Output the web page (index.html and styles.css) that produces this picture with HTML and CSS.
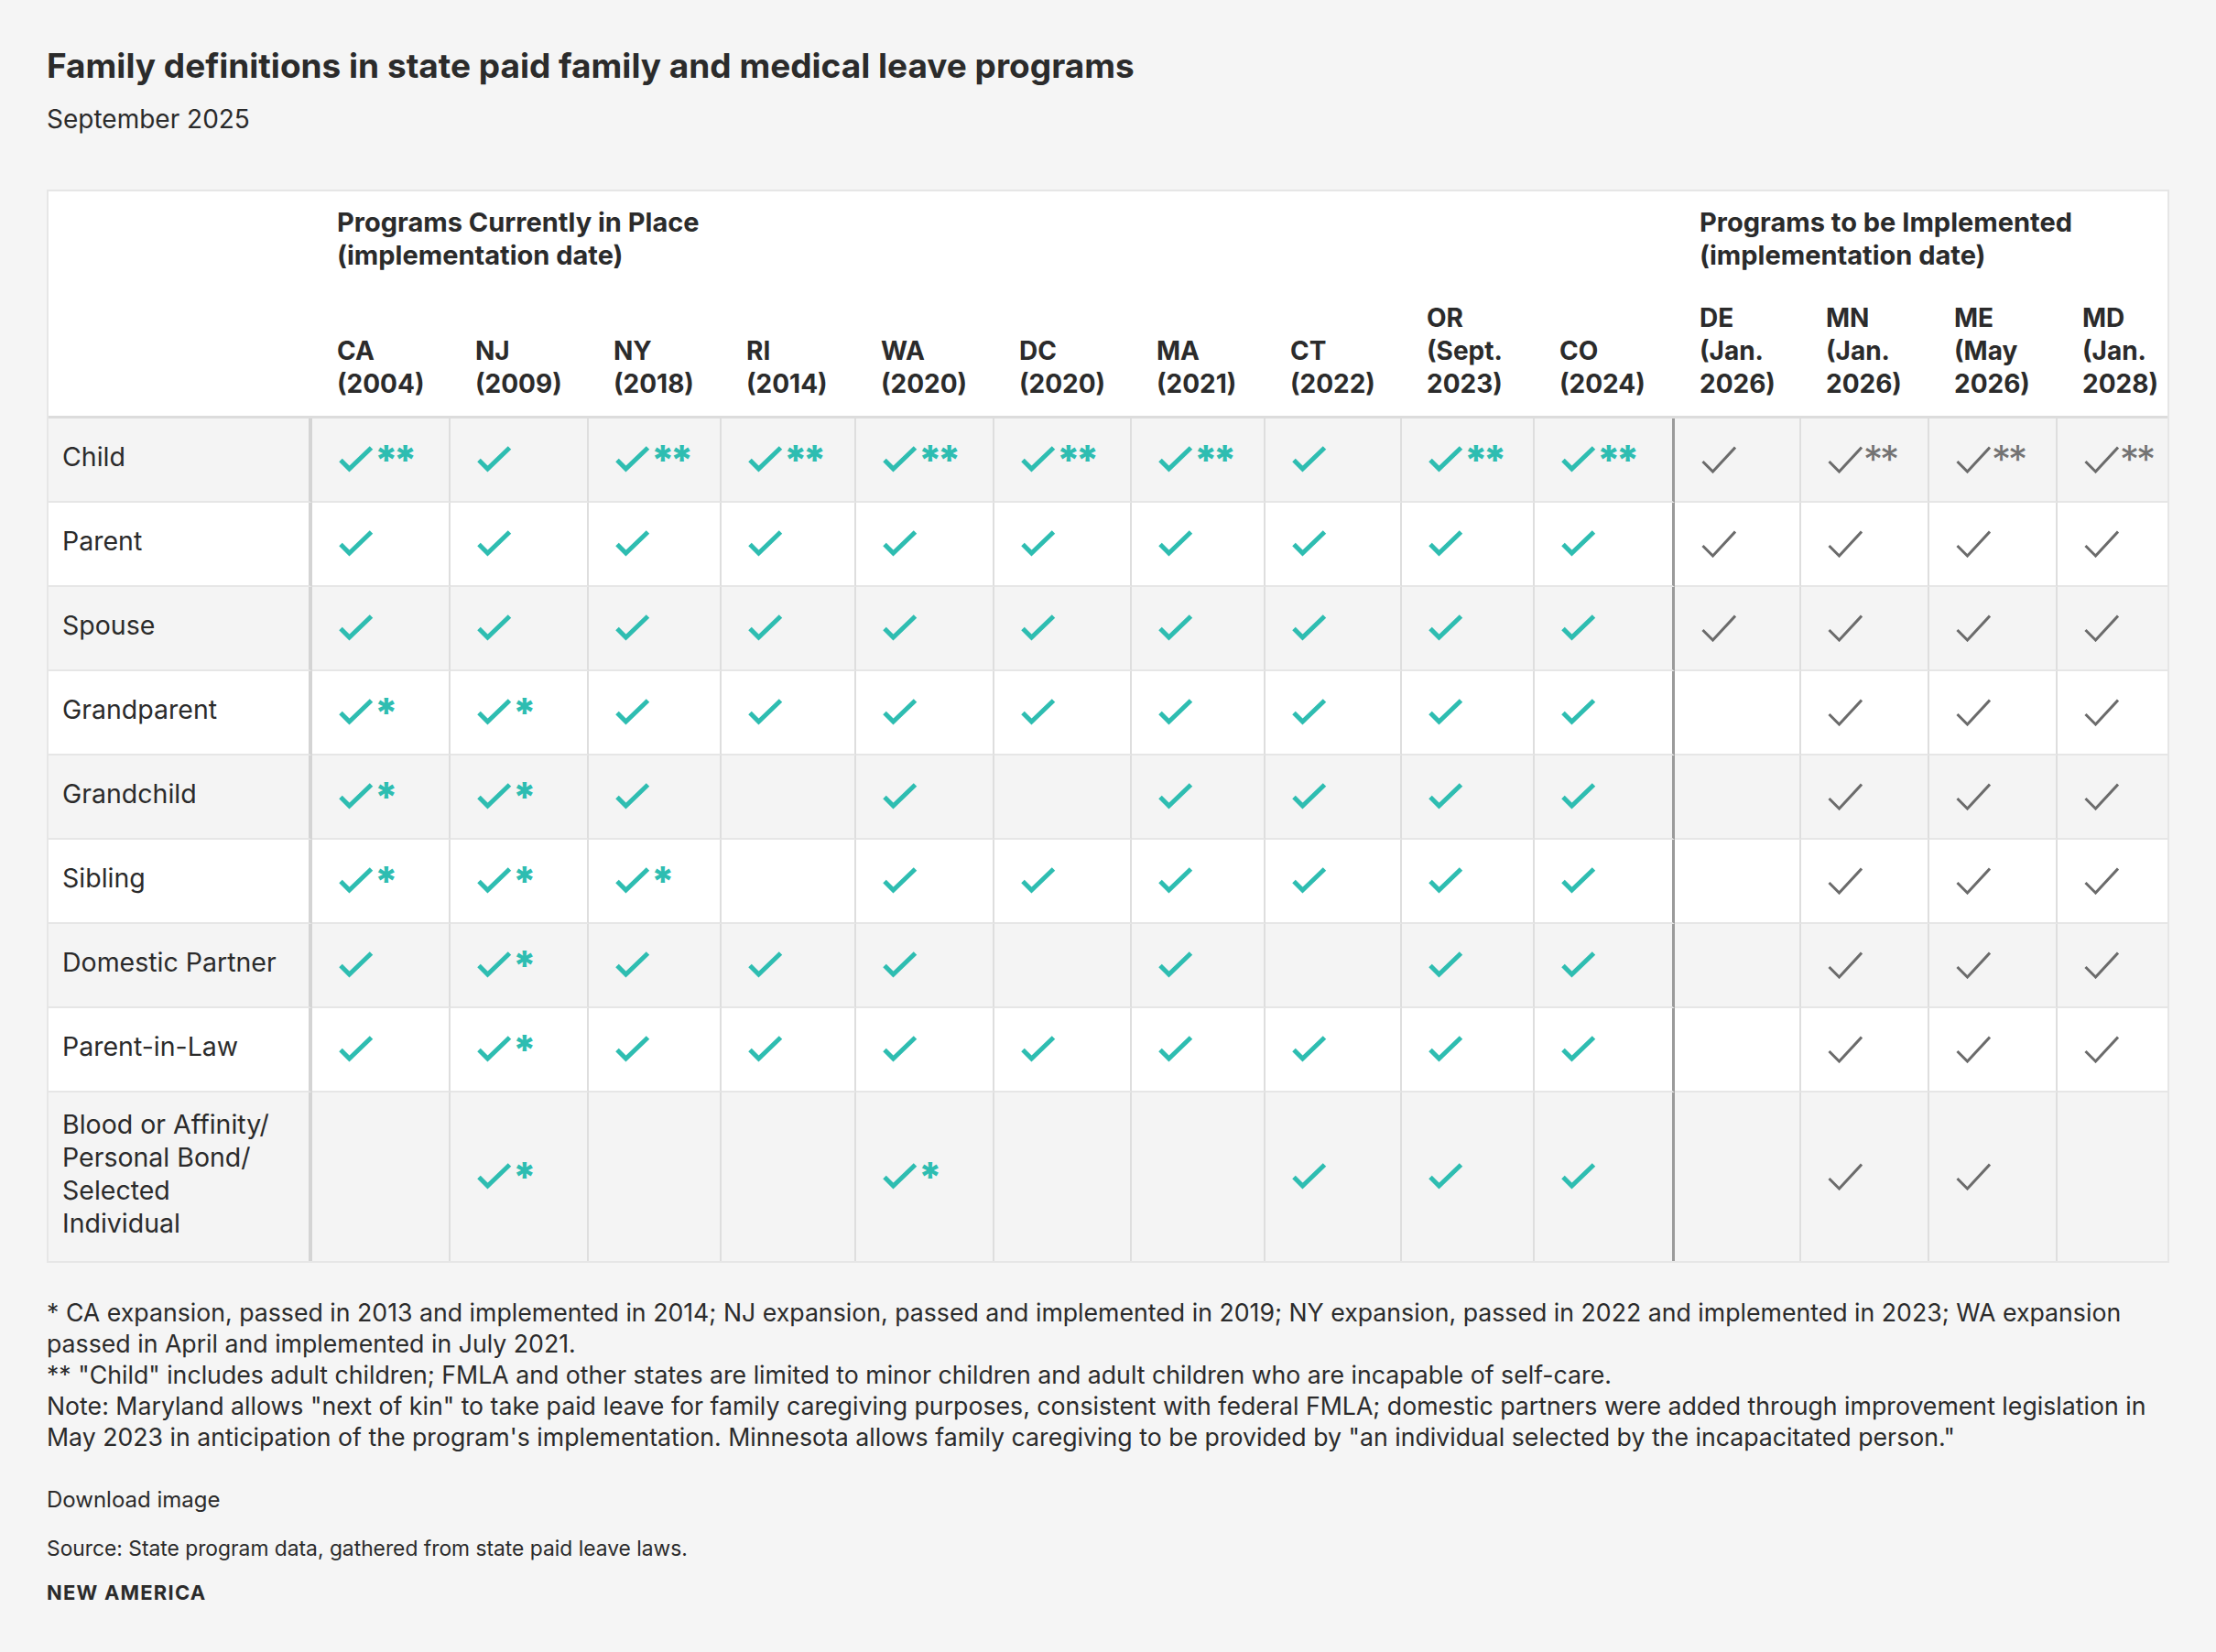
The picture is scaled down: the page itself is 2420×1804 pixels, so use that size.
FILE: index.html
```html
<!DOCTYPE html>
<html lang="en">
<head>
<meta charset="utf-8">
<title>Family definitions in state paid family and medical leave programs</title>
<link rel="stylesheet" href="styles.css">
</head>
<body>
<svg class="defs" width="0" height="0" aria-hidden="true">
  <symbol id="ckt" viewBox="0 0 38 30"><polyline points="2,15.5 11.5,25 35.5,2" fill="none" stroke="#2ebdb1" stroke-width="5" stroke-linejoin="miter"/></symbol>
  <symbol id="ckg" viewBox="0 0 38 30"><polyline points="1.5,17 12.5,28 37,1.5" fill="none" stroke="#6b6b6b" stroke-width="3" stroke-linejoin="miter"/></symbol>
</svg>
<main class="page">
  <h1 class="title">Family definitions in state paid family and medical leave programs</h1>
  <p class="subtitle">September 2025</p>

  <div class="table" role="table">
    <div class="hrow" role="row">
      <div class="hc h1c"></div>
      <div class="hc h1c span-now">Programs Currently in Place<br>(implementation date)</div>
      <div class="hc h1c span-future">Programs to be Implemented<br>(implementation date)</div>
    </div>
    <div class="hrow" role="row">
      <div class="hc h2c"></div>
      <div class="hc h2c">CA<br>(2004)</div>
      <div class="hc h2c">NJ<br>(2009)</div>
      <div class="hc h2c">NY<br>(2018)</div>
      <div class="hc h2c">RI<br>(2014)</div>
      <div class="hc h2c">WA<br>(2020)</div>
      <div class="hc h2c">DC<br>(2020)</div>
      <div class="hc h2c">MA<br>(2021)</div>
      <div class="hc h2c">CT<br>(2022)</div>
      <div class="hc h2c">OR<br>(Sept.<br>2023)</div>
      <div class="hc h2c">CO<br>(2024)</div>
      <div class="hc h2c">DE<br>(Jan.<br>2026)</div>
      <div class="hc h2c">MN<br>(Jan.<br>2026)</div>
      <div class="hc h2c">ME<br>(May<br>2026)</div>
      <div class="hc h2c">MD<br>(Jan.<br>2028)</div>
    </div>

    <!-- Child -->
    <div class="row alt" role="row">
      <div class="lab">Child</div>
      <div class="c"><span class="mk"><svg class="ck"><use href="#ckt"/></svg><span class="ast at">**</span></span></div>
      <div class="c"><span class="mk"><svg class="ck"><use href="#ckt"/></svg></span></div>
      <div class="c"><span class="mk"><svg class="ck"><use href="#ckt"/></svg><span class="ast at">**</span></span></div>
      <div class="c"><span class="mk"><svg class="ck"><use href="#ckt"/></svg><span class="ast at">**</span></span></div>
      <div class="c"><span class="mk"><svg class="ck"><use href="#ckt"/></svg><span class="ast at">**</span></span></div>
      <div class="c"><span class="mk"><svg class="ck"><use href="#ckt"/></svg><span class="ast at">**</span></span></div>
      <div class="c"><span class="mk"><svg class="ck"><use href="#ckt"/></svg><span class="ast at">**</span></span></div>
      <div class="c"><span class="mk"><svg class="ck"><use href="#ckt"/></svg></span></div>
      <div class="c"><span class="mk"><svg class="ck"><use href="#ckt"/></svg><span class="ast at">**</span></span></div>
      <div class="c div"><span class="mk"><svg class="ck"><use href="#ckt"/></svg><span class="ast at">**</span></span></div>
      <div class="c"><span class="mk"><svg class="ck"><use href="#ckg"/></svg></span></div>
      <div class="c"><span class="mk"><svg class="ck"><use href="#ckg"/></svg><span class="ast ag">**</span></span></div>
      <div class="c"><span class="mk"><svg class="ck"><use href="#ckg"/></svg><span class="ast ag">**</span></span></div>
      <div class="c end"><span class="mk"><svg class="ck"><use href="#ckg"/></svg><span class="ast ag">**</span></span></div>
    </div>

    <!-- Parent -->
    <div class="row" role="row">
      <div class="lab">Parent</div>
      <div class="c"><svg class="ck"><use href="#ckt"/></svg></div>
      <div class="c"><svg class="ck"><use href="#ckt"/></svg></div>
      <div class="c"><svg class="ck"><use href="#ckt"/></svg></div>
      <div class="c"><svg class="ck"><use href="#ckt"/></svg></div>
      <div class="c"><svg class="ck"><use href="#ckt"/></svg></div>
      <div class="c"><svg class="ck"><use href="#ckt"/></svg></div>
      <div class="c"><svg class="ck"><use href="#ckt"/></svg></div>
      <div class="c"><svg class="ck"><use href="#ckt"/></svg></div>
      <div class="c"><svg class="ck"><use href="#ckt"/></svg></div>
      <div class="c div"><svg class="ck"><use href="#ckt"/></svg></div>
      <div class="c"><svg class="ck"><use href="#ckg"/></svg></div>
      <div class="c"><svg class="ck"><use href="#ckg"/></svg></div>
      <div class="c"><svg class="ck"><use href="#ckg"/></svg></div>
      <div class="c end"><svg class="ck"><use href="#ckg"/></svg></div>
    </div>

    <!-- Spouse -->
    <div class="row alt" role="row">
      <div class="lab">Spouse</div>
      <div class="c"><svg class="ck"><use href="#ckt"/></svg></div>
      <div class="c"><svg class="ck"><use href="#ckt"/></svg></div>
      <div class="c"><svg class="ck"><use href="#ckt"/></svg></div>
      <div class="c"><svg class="ck"><use href="#ckt"/></svg></div>
      <div class="c"><svg class="ck"><use href="#ckt"/></svg></div>
      <div class="c"><svg class="ck"><use href="#ckt"/></svg></div>
      <div class="c"><svg class="ck"><use href="#ckt"/></svg></div>
      <div class="c"><svg class="ck"><use href="#ckt"/></svg></div>
      <div class="c"><svg class="ck"><use href="#ckt"/></svg></div>
      <div class="c div"><svg class="ck"><use href="#ckt"/></svg></div>
      <div class="c"><svg class="ck"><use href="#ckg"/></svg></div>
      <div class="c"><svg class="ck"><use href="#ckg"/></svg></div>
      <div class="c"><svg class="ck"><use href="#ckg"/></svg></div>
      <div class="c end"><svg class="ck"><use href="#ckg"/></svg></div>
    </div>

    <!-- Grandparent -->
    <div class="row" role="row">
      <div class="lab">Grandparent</div>
      <div class="c"><span class="mk"><svg class="ck"><use href="#ckt"/></svg><span class="ast at">*</span></span></div>
      <div class="c"><span class="mk"><svg class="ck"><use href="#ckt"/></svg><span class="ast at">*</span></span></div>
      <div class="c"><svg class="ck"><use href="#ckt"/></svg></div>
      <div class="c"><svg class="ck"><use href="#ckt"/></svg></div>
      <div class="c"><svg class="ck"><use href="#ckt"/></svg></div>
      <div class="c"><svg class="ck"><use href="#ckt"/></svg></div>
      <div class="c"><svg class="ck"><use href="#ckt"/></svg></div>
      <div class="c"><svg class="ck"><use href="#ckt"/></svg></div>
      <div class="c"><svg class="ck"><use href="#ckt"/></svg></div>
      <div class="c div"><svg class="ck"><use href="#ckt"/></svg></div>
      <div class="c"></div>
      <div class="c"><svg class="ck"><use href="#ckg"/></svg></div>
      <div class="c"><svg class="ck"><use href="#ckg"/></svg></div>
      <div class="c end"><svg class="ck"><use href="#ckg"/></svg></div>
    </div>

    <!-- Grandchild -->
    <div class="row alt" role="row">
      <div class="lab">Grandchild</div>
      <div class="c"><span class="mk"><svg class="ck"><use href="#ckt"/></svg><span class="ast at">*</span></span></div>
      <div class="c"><span class="mk"><svg class="ck"><use href="#ckt"/></svg><span class="ast at">*</span></span></div>
      <div class="c"><svg class="ck"><use href="#ckt"/></svg></div>
      <div class="c"></div>
      <div class="c"><svg class="ck"><use href="#ckt"/></svg></div>
      <div class="c"></div>
      <div class="c"><svg class="ck"><use href="#ckt"/></svg></div>
      <div class="c"><svg class="ck"><use href="#ckt"/></svg></div>
      <div class="c"><svg class="ck"><use href="#ckt"/></svg></div>
      <div class="c div"><svg class="ck"><use href="#ckt"/></svg></div>
      <div class="c"></div>
      <div class="c"><svg class="ck"><use href="#ckg"/></svg></div>
      <div class="c"><svg class="ck"><use href="#ckg"/></svg></div>
      <div class="c end"><svg class="ck"><use href="#ckg"/></svg></div>
    </div>

    <!-- Sibling -->
    <div class="row" role="row">
      <div class="lab">Sibling</div>
      <div class="c"><span class="mk"><svg class="ck"><use href="#ckt"/></svg><span class="ast at">*</span></span></div>
      <div class="c"><span class="mk"><svg class="ck"><use href="#ckt"/></svg><span class="ast at">*</span></span></div>
      <div class="c"><span class="mk"><svg class="ck"><use href="#ckt"/></svg><span class="ast at">*</span></span></div>
      <div class="c"></div>
      <div class="c"><svg class="ck"><use href="#ckt"/></svg></div>
      <div class="c"><svg class="ck"><use href="#ckt"/></svg></div>
      <div class="c"><svg class="ck"><use href="#ckt"/></svg></div>
      <div class="c"><svg class="ck"><use href="#ckt"/></svg></div>
      <div class="c"><svg class="ck"><use href="#ckt"/></svg></div>
      <div class="c div"><svg class="ck"><use href="#ckt"/></svg></div>
      <div class="c"></div>
      <div class="c"><svg class="ck"><use href="#ckg"/></svg></div>
      <div class="c"><svg class="ck"><use href="#ckg"/></svg></div>
      <div class="c end"><svg class="ck"><use href="#ckg"/></svg></div>
    </div>

    <!-- Domestic Partner -->
    <div class="row alt" role="row">
      <div class="lab">Domestic Partner</div>
      <div class="c"><svg class="ck"><use href="#ckt"/></svg></div>
      <div class="c"><span class="mk"><svg class="ck"><use href="#ckt"/></svg><span class="ast at">*</span></span></div>
      <div class="c"><svg class="ck"><use href="#ckt"/></svg></div>
      <div class="c"><svg class="ck"><use href="#ckt"/></svg></div>
      <div class="c"><svg class="ck"><use href="#ckt"/></svg></div>
      <div class="c"></div>
      <div class="c"><svg class="ck"><use href="#ckt"/></svg></div>
      <div class="c"></div>
      <div class="c"><svg class="ck"><use href="#ckt"/></svg></div>
      <div class="c div"><svg class="ck"><use href="#ckt"/></svg></div>
      <div class="c"></div>
      <div class="c"><svg class="ck"><use href="#ckg"/></svg></div>
      <div class="c"><svg class="ck"><use href="#ckg"/></svg></div>
      <div class="c end"><svg class="ck"><use href="#ckg"/></svg></div>
    </div>

    <!-- Parent-in-Law -->
    <div class="row" role="row">
      <div class="lab">Parent-in-Law</div>
      <div class="c"><svg class="ck"><use href="#ckt"/></svg></div>
      <div class="c"><span class="mk"><svg class="ck"><use href="#ckt"/></svg><span class="ast at">*</span></span></div>
      <div class="c"><svg class="ck"><use href="#ckt"/></svg></div>
      <div class="c"><svg class="ck"><use href="#ckt"/></svg></div>
      <div class="c"><svg class="ck"><use href="#ckt"/></svg></div>
      <div class="c"><svg class="ck"><use href="#ckt"/></svg></div>
      <div class="c"><svg class="ck"><use href="#ckt"/></svg></div>
      <div class="c"><svg class="ck"><use href="#ckt"/></svg></div>
      <div class="c"><svg class="ck"><use href="#ckt"/></svg></div>
      <div class="c div"><svg class="ck"><use href="#ckt"/></svg></div>
      <div class="c"></div>
      <div class="c"><svg class="ck"><use href="#ckg"/></svg></div>
      <div class="c"><svg class="ck"><use href="#ckg"/></svg></div>
      <div class="c end"><svg class="ck"><use href="#ckg"/></svg></div>
    </div>

    <!-- Blood or Affinity -->
    <div class="row alt last" role="row">
      <div class="lab">Blood or Affinity/<br>Personal Bond/<br>Selected<br>Individual</div>
      <div class="c"></div>
      <div class="c"><span class="mk"><svg class="ck"><use href="#ckt"/></svg><span class="ast at">*</span></span></div>
      <div class="c"></div>
      <div class="c"></div>
      <div class="c"><span class="mk"><svg class="ck"><use href="#ckt"/></svg><span class="ast at">*</span></span></div>
      <div class="c"></div>
      <div class="c"></div>
      <div class="c"><svg class="ck"><use href="#ckt"/></svg></div>
      <div class="c"><svg class="ck"><use href="#ckt"/></svg></div>
      <div class="c div"><svg class="ck"><use href="#ckt"/></svg></div>
      <div class="c"></div>
      <div class="c"><svg class="ck"><use href="#ckg"/></svg></div>
      <div class="c"><svg class="ck"><use href="#ckg"/></svg></div>
      <div class="c end"></div>
    </div>
  </div>

  <p class="notes">* CA expansion, passed in 2013 and implemented in 2014; NJ expansion, passed and implemented in 2019; NY expansion, passed in 2022 and implemented in 2023; WA expansion<br>passed in April and implemented in July 2021.<br>** "Child" includes adult children; FMLA and other states are limited to minor children and adult children who are incapable of self-care.<br>Note: Maryland allows "next of kin" to take paid leave for family caregiving purposes, consistent with federal FMLA; domestic partners were added through improvement legislation in<br>May 2023 in anticipation of the program's implementation. Minnesota allows family caregiving to be provided by "an individual selected by the incapacitated person."</p>

  <p class="download">Download image</p>
  <p class="source">Source: State program data, gathered from state paid leave laws.</p>
  <p class="brand">NEW AMERICA</p>
</main>
</body>
</html>
```

FILE: styles.css
```css
* { box-sizing: border-box; }

html, body {
  margin: 0;
  padding: 0;
  background: #f5f5f5;
}

body {
  font-family: Inter, "Liberation Sans", sans-serif;
  color: #2b2b2b;
  min-height: 1804px;
}

.defs { position: absolute; width: 0; height: 0; overflow: hidden; }

.page {
  padding: 50px 51px 40px;
}

.title {
  margin: 0;
  font-size: 37px;
  line-height: 44px;
  font-weight: 700;
}

.subtitle {
  margin: 18px 0 0;
  font-size: 28px;
  line-height: 36px;
}

.table {
  margin-top: 59px;
  width: 2318px;
  display: grid;
  grid-template-columns: 288px 151px 151px 145px 147px 151px 150px 146px 149px 145px 153px 138px 140px 140px 120px;
  border: 2px solid #e6e6e6;
  background: #fff;
}

.hrow, .row { display: contents; }

.hc {
  font-weight: 700;
  font-size: 28px;
  line-height: 36px;
  padding-left: 27px;
}

.h1c {
  padding-top: 16px;
  font-size: 29px;
}

.span-now { grid-column: 2 / span 10; }
.span-future { grid-column: 12 / span 4; }

.h2c {
  padding-top: 32px;
  padding-bottom: 17px;
  border-bottom: 3px solid #dcdcdc;
  display: flex;
  flex-direction: column;
  justify-content: flex-end;
  font-variant-numeric: proportional-nums;
}

.lab {
  font-size: 28.5px;
  line-height: 36px;
  padding: 17px 15px 23px;
  min-height: 92px;
  display: flex;
  align-items: center;
  border-right: 4px solid #d4d4d4;
  border-bottom: 2px solid #e6e6e6;
}

.c {
  padding-left: 29px;
  display: flex;
  align-items: center;
  border-right: 2px solid #dedede;
  border-bottom: 2px solid #e6e6e6;
}

.c.div { border-right: 3px solid #9a9a9a; }
.c.end { border-right: 0; }

.row.alt > .lab,
.row.alt > .c { background: #f4f4f4; }

.row.last > .lab,
.row.last > .c { border-bottom: 0; }

.ck {
  width: 38px;
  height: 30px;
  display: block;
  flex: none;
}

.mk {
  display: flex;
  align-items: flex-start;
}

.ast {
  line-height: 30px;
  height: 30px;
  margin-left: 1px;
}

.ast.at {
  color: #2ebdb1;
  font-weight: 800;
  font-size: 44px;
  letter-spacing: -5px;
}

.ast.ag {
  color: #737373;
  font-weight: 400;
  font-size: 42px;
  letter-spacing: -3px;
}

.notes {
  margin: 37px 0 0;
  font-size: 26.7px;
  line-height: 34px;
  font-variant-numeric: proportional-nums;
}

.download {
  margin: 37px 0 0;
  font-size: 24px;
  line-height: 30px;
}

.source {
  margin: 24px 0 0;
  font-size: 22.8px;
  line-height: 28px;
}

.brand {
  margin: 21px 0 0;
  font-size: 22px;
  line-height: 26px;
  font-weight: 700;
  letter-spacing: 1.2px;
}
```
